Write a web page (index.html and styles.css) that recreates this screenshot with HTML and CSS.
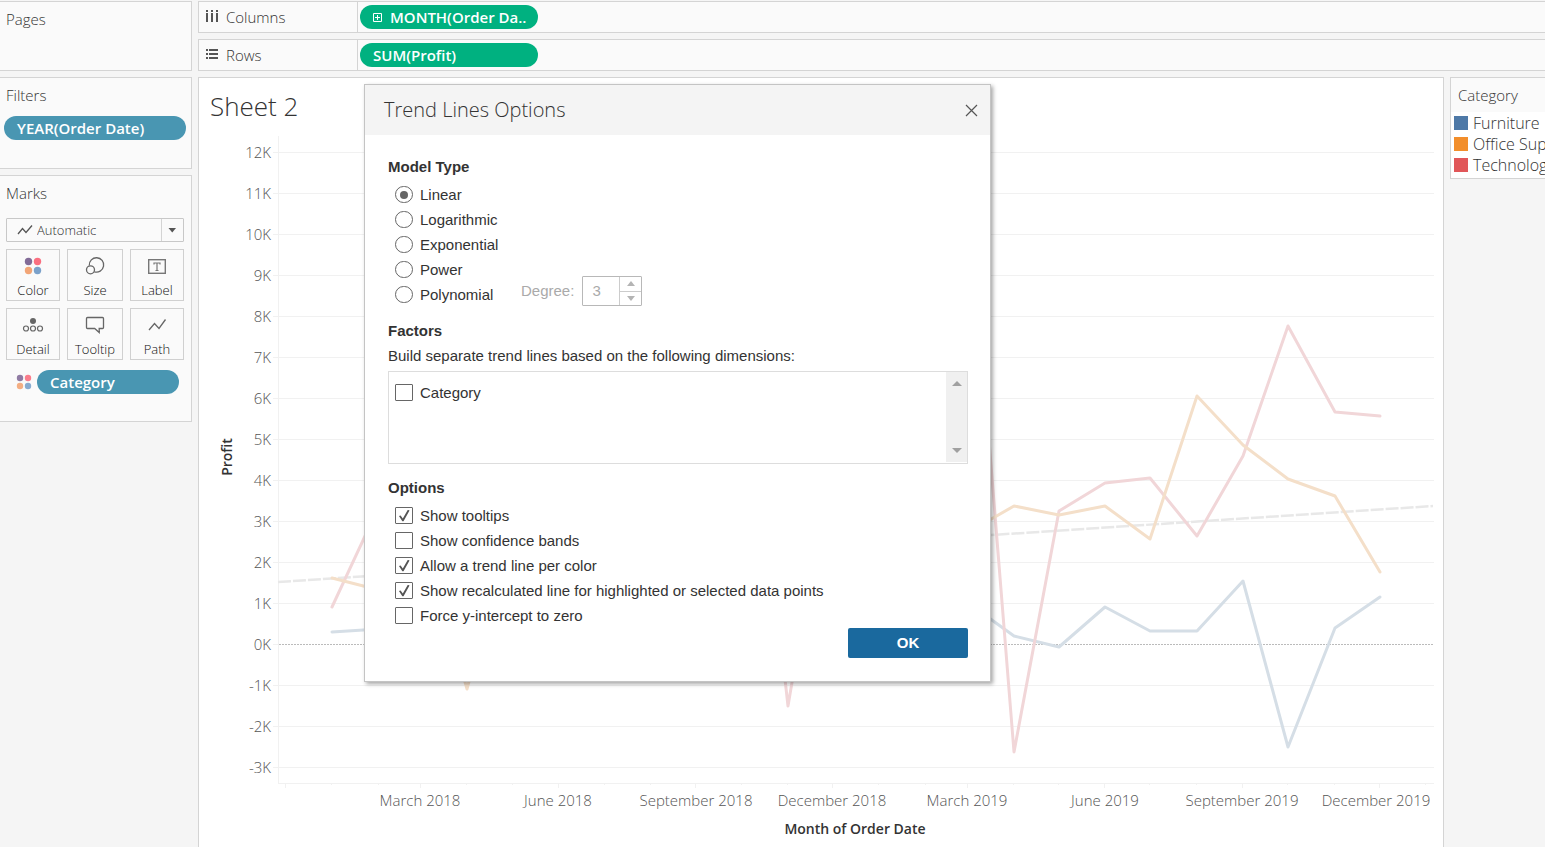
FILE: index.html
```html
<!DOCTYPE html>
<html lang="en">
<head>
<meta charset="utf-8">
<title>Sheet 2 - Trend Lines Options</title>
<link rel="stylesheet" href="styles.css">
</head>
<body>
<div class="workbook">
  <aside class="sidebar">
    <section class="card pages"><h2 class="card-title">Pages</h2></section>
    <section class="card filters">
      <h2 class="card-title">Filters</h2>
      <button class="pill pill-blue filter-pill" type="button">YEAR(Order Date)</button>
    </section>
    <section class="card marks">
      <h2 class="card-title">Marks</h2>
      <div class="mark-type">
        <svg class="mark-type-icon" width="16" height="12" viewBox="0 0 16 12"><path d="M1 10 5.500 4.500 9 8.500 15 1.500" fill="none" stroke="#555" stroke-width="1.300"/></svg>
        <select class="mark-select" aria-label="Mark type"><option>Automatic</option></select>
        <svg class="mark-type-arrow" width="22" height="22" viewBox="0 0 22 22"><path d="M.5 0V22" stroke="#d4d4d4"/><path d="M7.500 9h7.500l-3.750 4.500z" fill="#555"/></svg>
      </div>
      <div class="mark-grid">
        <button class="mark-button" type="button">
          <svg width="24" height="20" viewBox="0 0 24 20"><circle cx="7.500" cy="5.500" r="3.700" fill="#826b97"/><circle cx="16.500" cy="5.500" r="3.700" fill="#fa6f80"/><circle cx="7.500" cy="14.500" r="3.700" fill="#f2a576"/><circle cx="16.500" cy="14.500" r="3.700" fill="#7ba1ca"/></svg>Color</button>
        <button class="mark-button" type="button">
          <svg width="24" height="20" viewBox="0 0 24 20" fill="none" stroke="#666" stroke-width="1.300"><path d="M6.300 9.500A7.200 7.200 0 1 1 11.300 15.800"/><circle cx="7.500" cy="13.800" r="4"/></svg>Size</button>
        <button class="mark-button" type="button">
          <svg width="24" height="20" viewBox="0 0 24 20"><rect x="3.700" y="3.700" width="16.600" height="13.600" fill="none" stroke="#777" stroke-width="1.400"/><path d="M9 8.500V7h6v1.500M12 7v7.500M10.500 14.500h3" fill="none" stroke="#777" stroke-width="1.200"/></svg>Label</button>
        <button class="mark-button" type="button">
          <svg width="24" height="20" viewBox="0 0 24 20"><circle cx="12" cy="6" r="3" fill="#666"/><g fill="none" stroke="#666" stroke-width="1.200"><circle cx="5" cy="13.500" r="2.500"/><circle cx="12" cy="13.500" r="2.500"/><circle cx="19" cy="13.500" r="2.500"/></g></svg>Detail</button>
        <button class="mark-button" type="button">
          <svg width="24" height="20" viewBox="0 0 24 20"><path d="M4.500 2.500h15q1 0 1 1v9q0 1-1 1h-3.300v4l-4.500-4H4.500q-1 0-1-1v-9q0-1 1-1z" fill="none" stroke="#666" stroke-width="1.300"/></svg>Tooltip</button>
        <button class="mark-button" type="button">
          <svg width="24" height="20" viewBox="0 0 24 20"><path d="M4 15 9.500 8.500 14 13.500 20.500 4.500" fill="none" stroke="#666" stroke-width="1.300"/></svg>Path</button>
      </div>
      <div class="mark-field">
        <svg width="16" height="16" viewBox="0 0 16 16"><circle cx="4" cy="4" r="3.200" fill="#8f7ba3"/><circle cx="12" cy="4" r="3.200" fill="#fa7d8c"/><circle cx="4" cy="12" r="3.200" fill="#f4ae83"/><circle cx="12" cy="12" r="3.200" fill="#88abd0"/></svg>
        <button class="pill pill-blue" type="button">Category</button>
      </div>
    </section>
  </aside>

  <div class="shelves">
    <section class="shelf">
      <h2 class="shelf-label"><svg width="14" height="14" viewBox="0 0 14 14" fill="#555"><path d="M1 0h2v2H1zM6 0h2v2H6zM11 0h2v2h-2zM1 3h2v9H1zM6 3h2v9H6zM11 3h2v9h-2z"/></svg>Columns</h2>
      <button class="pill pill-green" type="button"><svg width="9" height="9" viewBox="0 0 9 9"><path d="M.5.5h8v8h-8zM2 4.500h5M4.500 2v5" fill="none" stroke="#fff"/></svg>MONTH(Order Da..</button>
    </section>
    <section class="shelf">
      <h2 class="shelf-label"><svg width="14" height="14" viewBox="0 0 14 14" fill="#555"><path d="M1 1h2v2H1zM1 5h2v2H1zM1 9h2v2H1zM4 1h9v2H4zM4 5h9v2H4zM4 9h9v2H4z"/></svg>Rows</h2>
      <button class="pill pill-green" type="button">SUM(Profit)</button>
    </section>
  </div>

  <main class="sheet">
    <h1 class="sheet-title">Sheet 2</h1>
    <svg class="chart" viewBox="199 136 1244 711" role="img" aria-label="Profit by month of order date">
      <g class="grid"><path d="M278.500 136V783M278 783.500H1434M273 152.500H1434M273 193.500H1434M273 234.500H1434M273 275.500H1434M273 316.500H1434M273 357.500H1434M273 398.500H1434M273 439.500H1434M273 480.500H1434M273 521.500H1434M273 562.500H1434M273 603.500H1434M273 685.500H1434M273 726.500H1434M273 767.500H1434M273 644.500H278"/>
      <path d="M285.500 783v5M420.500 783v5M558.500 783v5M695.500 783v5M832.500 783v5M967.500 783v5M1104.500 783v5M1242.500 783v5M1379.500 783v5M331.500 783v2M378.500 783v2M466.500 783v2M512.500 783v2M604.500 783v2M650.500 783v2M741.500 783v2M787.500 783v2M878.500 783v2M925.500 783v2M1013.500 783v2M1058.500 783v2M1149.500 783v2M1196.500 783v2M1287.500 783v2M1334.500 783v2M1425.500 783v2"/></g>
      <path class="zero" d="M279 644.500H1433"/>
      <path class="trend" d="M278 582 1433 506"/>
      <path class="series furniture" d="M332 632 379 629 420 640 467 620 512 625 558 610 604 640 650 630 695 600 741 620 787 610 832 590 878 620 925 580 967 602 1014 636 1059 647 1105 607 1150 631 1197 631 1243 581 1288 747 1335 628 1380 597"/>
      <path class="series technology" d="M332 607 379 506 420 420 467 520 512 480 558 510 604 470 650 500 695 430 741 286 788 706 832 446 878 480 925 420 967 165 1014 752 1059 511 1105 483 1150 478 1197 536 1243 456 1288 326 1335 412 1380 416"/>
      <path class="series office" d="M332 578 379 590 420 520 467 689 512 520 558 540 604 500 650 560 695 480 741 500 787 520 832 480 878 520 925 560 967 533 1014 506 1059 515 1105 506 1150 539 1197 396 1243 445 1288 479 1335 496 1380 572"/>
      <g class="axis-labels y-labels">
        <text x="271" y="158">12K</text><text x="271" y="199">11K</text><text x="271" y="240">10K</text><text x="271" y="281">9K</text><text x="271" y="322">8K</text><text x="271" y="363">7K</text><text x="271" y="404">6K</text><text x="271" y="445">5K</text><text x="271" y="486">4K</text><text x="271" y="527">3K</text><text x="271" y="568">2K</text><text x="271" y="609">1K</text><text x="271" y="650">0K</text><text x="271" y="691">-1K</text><text x="271" y="732">-2K</text><text x="271" y="773">-3K</text>
      </g>
      <g class="axis-labels x-labels">
        <text x="420" y="806">March 2018</text><text x="558" y="806">June 2018</text><text x="696" y="806">September 2018</text><text x="832" y="806">December 2018</text><text x="967" y="806">March 2019</text><text x="1105" y="806">June 2019</text><text x="1242" y="806">September 2019</text><text x="1376" y="806">December 2019</text>
      </g>
      <text class="axis-title" x="855" y="834">Month of Order Date</text>
      <text class="axis-title" transform="translate(232 457) rotate(-90)">Profit</text>
    </svg>
  </main>

  <aside class="card legend">
    <h2 class="card-title">Category</h2>
    <ul class="legend-list">
      <li><span class="swatch swatch-furniture"></span>Furniture</li>
      <li><span class="swatch swatch-office"></span>Office Sup</li>
      <li><span class="swatch swatch-technology"></span>Technolog</li>
    </ul>
  </aside>
</div>

<dialog class="dialog" open aria-labelledby="dialog-title">
  <header class="dialog-header">
    <h2 class="dialog-title" id="dialog-title">Trend Lines Options</h2>
    <button class="dialog-close" type="button" aria-label="Close"><svg width="13" height="13" viewBox="0 0 13 13"><path d="M1 1 12 12M12 1 1 12" stroke="#555" stroke-width="1.200"/></svg></button>
  </header>
  <form class="dialog-body">
    <h3 class="group-title">Model Type</h3>
    <div class="model">
      <div class="choices model-choices">
        <label class="choice"><input type="radio" name="model" checked>Linear</label>
        <label class="choice"><input type="radio" name="model">Logarithmic</label>
        <label class="choice"><input type="radio" name="model">Exponential</label>
        <label class="choice"><input type="radio" name="model">Power</label>
        <label class="choice"><input type="radio" name="model">Polynomial</label>
      </div>
      <div class="degree">
        <label for="degree">Degree:</label>
        <div class="spinner">
          <input id="degree" type="text" value="3" disabled>
          <div class="spinner-buttons">
            <button type="button" disabled aria-label="Increase"><svg width="8" height="5" viewBox="0 0 8 5"><path d="M0 5h8L4 0z" fill="#b4b4b4"/></svg></button>
            <button type="button" disabled aria-label="Decrease"><svg width="8" height="5" viewBox="0 0 8 5"><path d="M0 0h8L4 5z" fill="#b4b4b4"/></svg></button>
          </div>
        </div>
      </div>
    </div>
    <h3 class="group-title factors-title">Factors</h3>
    <p class="hint">Build separate trend lines based on the following dimensions:</p>
    <div class="factor-list">
      <label class="choice"><input type="checkbox">Category</label>
      <div class="scrollbar">
        <button type="button" aria-label="Scroll up"><svg width="10" height="5" viewBox="0 0 10 5"><path d="M0 5h10L5 0z" fill="#a0a0a0"/></svg></button>
        <button type="button" aria-label="Scroll down"><svg width="10" height="5" viewBox="0 0 10 5"><path d="M0 0h10L5 5z" fill="#a0a0a0"/></svg></button>
      </div>
    </div>
    <h3 class="group-title options-title">Options</h3>
    <div class="choices">
      <label class="choice"><input type="checkbox" checked>Show tooltips</label>
      <label class="choice"><input type="checkbox">Show confidence bands</label>
      <label class="choice"><input type="checkbox" checked>Allow a trend line per color</label>
      <label class="choice"><input type="checkbox" checked>Show recalculated line for highlighted or selected data points</label>
      <label class="choice"><input type="checkbox">Force y-intercept to zero</label>
    </div>
    <button class="ok" type="button">OK</button>
  </form>
</dialog>
</body>
</html>
```
FILE: styles.css
```css
* { box-sizing: border-box; }

body {
  margin: 0;
  min-height: 100vh;
  overflow: hidden;
  background: #f5f5f5;
  color: #333;
  font: 350 15px/20px "Open Sans", "Noto Sans", sans-serif;
}

h1, h2, h3, p, ul { margin: 0; padding: 0; }
button, input, select { font: inherit; color: inherit; }
button { padding: 0; border: 0; background: none; }
svg { display: block; flex: none; }

.workbook {
  display: grid;
  grid-template-columns: 192px minmax(0, 1fr) 95px;
  grid-template-rows: auto 1fr;
  column-gap: 6px;
  row-gap: 6px;
  min-height: 100vh;
  padding-top: 1px;
}

.card { border: 1px solid #d4d4d4; background: #fafafa; }
.card-title { padding: 7px 6px 0; font-size: 15px; font-weight: 350; line-height: 20px; }

.sidebar { grid-row: 1 / 3; display: flex; flex-direction: column; gap: 6px; }
.sidebar .card { border-left: 0; }
.pages { min-height: 70px; }
.filters { min-height: 92px; }
.marks { min-height: 247px; }

.pill {
  display: flex;
  align-items: center;
  gap: 8px;
  height: 24px;
  padding: 0 13px;
  border-radius: 12px;
  color: #fff;
  font-weight: 600;
  white-space: nowrap;
}
.pill-blue { background: #4996b2; }
.pill-green { width: 178px; background: #00b180; }
.filter-pill { width: 182px; margin: 11px 4px 0; }

.mark-type {
  position: relative;
  width: 178px;
  height: 24px;
  margin: 15px 6px 7px;
}
.mark-select {
  width: 100%;
  height: 100%;
  padding: 0 24px 0 30px;
  border: 1px solid #c8c8c8;
  border-radius: 1px;
  appearance: none;
  background: #fafafa;
  font-size: 13px;
}
.mark-type-icon { position: absolute; top: 6px; left: 11px; }
.mark-type-arrow { position: absolute; top: 1px; right: 1px; pointer-events: none; }

.mark-grid {
  display: grid;
  grid-template-columns: 54px 56px 54px;
  gap: 7px;
  margin: 0 6px;
}
.mark-button {
  display: flex;
  flex-direction: column;
  align-items: center;
  gap: 5px;
  height: 52px;
  padding-top: 6px;
  border: 1px solid #d0d0d0;
  color: #111;
  font-size: 13px;
  line-height: 18px;
}
.mark-field { display: flex; align-items: center; gap: 5px; margin: 10px 12px 0 16px; }
.mark-field .pill { flex: 1; }

.shelves { grid-column: 2 / 4; display: grid; gap: 6px; }
.shelf {
  display: flex;
  align-items: center;
  gap: 2px;
  height: 32px;
  border: 1px solid #d4d4d4;
  border-right: 0;
  background: #fafafa;
}
.shelf-label {
  display: flex;
  align-items: center;
  gap: 7px;
  width: 159px;
  height: 100%;
  padding-left: 6px;
  border-right: 1px solid #d4d4d4;
  font-size: 15px;
  font-weight: 350;
}

.sheet { border: 1px solid #d4d4d4; border-bottom: 0; background: #fff; }
.sheet-title { padding: 10px 11px 12px; font-size: 26px; font-weight: 300; line-height: 36px; }
.chart { width: 100%; height: auto; }
.grid { fill: none; stroke: #f1f1f1; }
.zero { stroke: #bbb; stroke-dasharray: 2 1; }
.series { fill: none; stroke-width: 3; stroke-linejoin: round; stroke-linecap: round; }
.trend { stroke: #e8e8e8; stroke-width: 2.5; stroke-dasharray: 13 2; }
.furniture { stroke: #d5dee6; }
.technology { stroke: #f1d6d8; }
.office { stroke: #f4dfc9; }
.axis-labels { fill: #555; font-size: 15px; }
.y-labels { text-anchor: end; }
.x-labels { text-anchor: middle; }
.axis-title { fill: #333; font-size: 14px; font-weight: 600; text-anchor: middle; }

.legend { align-self: start; overflow: hidden; border-right: 0; }
.legend .card-title { padding: 7px 7px; }
.legend-list { padding-bottom: 3px; background: #fff; list-style: none; }
.legend li {
  display: flex;
  align-items: center;
  gap: 5px;
  height: 21px;
  padding-left: 3px;
  font-size: 16px;
  white-space: nowrap;
}
.swatch { flex: none; width: 14px; height: 14px; }
.swatch-furniture { background: #4e79a7; }
.swatch-office { background: #f28e2b; }
.swatch-technology { background: #e15759; }

.dialog {
  position: absolute;
  top: 84px;
  left: 364px;
  width: 627px;
  margin: 0;
  padding: 0;
  border: 1px solid #c4c4c4;
  background: #fff;
  box-shadow: 2px 2px 4px rgba(0, 0, 0, .35);
  color: #333;
  font: 15px/20px "Liberation Sans", Arial, sans-serif;
}
.dialog-header {
  display: flex;
  align-items: center;
  justify-content: space-between;
  height: 50px;
  padding: 0 12px 0 19px;
  background: #f4f4f4;
}
.dialog-title { font: 350 20px/28px "Open Sans", "Noto Sans", sans-serif; }
.dialog-body { display: flex; flex-direction: column; padding: 20px 22px 23px 23px; }
.group-title { font-size: 15px; line-height: 24px; }
.model { display: flex; align-items: flex-end; margin-top: 3px; }
.model-choices { width: 133px; }
.choice { display: flex; align-items: center; gap: 7px; height: 25px; padding-left: 7px; }
.choice input {
  display: grid;
  place-items: center;
  width: 18px;
  height: 17px;
  margin: 0;
  border: 1px solid #666;
  border-radius: 1px;
  appearance: none;
  background: #fff;
}
.choice input[type="radio"] { border-radius: 9px; }
.choice input[type="radio"]:checked::after {
  content: "";
  width: 8px;
  height: 8px;
  border-radius: 4px;
  background: #666;
}
.choice input[type="checkbox"]:checked::after {
  content: "";
  width: 12px;
  height: 12px;
  background: #555;
  clip-path: polygon(8% 55%, 22% 50%, 40% 75%, 82% 2%, 96% 8%, 46% 98%, 36% 98%);
}
.degree { display: flex; align-items: center; gap: 8px; margin-bottom: 1px; color: #aaa; }
.spinner { display: flex; width: 60px; height: 30px; border: 1px solid #b8b8b8; border-radius: 1px; }
.spinner input { width: 36px; padding: 0 9px; border: 0; background: #fff; }
.spinner-buttons { display: grid; flex: 1; border-left: 1px solid #ccc; }
.spinner-buttons button { display: grid; place-items: center; }
.spinner-buttons button + button { border-top: 1px solid #ccc; }
.factors-title { margin-top: 12px; }
.hint { line-height: 26px; }
.factor-list {
  display: flex;
  justify-content: space-between;
  height: 93px;
  margin-top: 2px;
  border: 1px solid #ddd;
}
.factor-list .choice { margin-top: 8px; padding-left: 6px; }
.scrollbar {
  display: flex;
  flex-direction: column;
  justify-content: space-between;
  width: 21px;
  margin-bottom: 1px;
  background: #f0f0f0;
}
.scrollbar button { display: grid; place-items: center; height: 23px; }
.options-title { margin: 12px 0 3px; }
.ok {
  align-self: flex-end;
  width: 120px;
  height: 30px;
  border-radius: 2px;
  background: #1a699e;
  color: #fff;
  font-weight: 700;
}
```
